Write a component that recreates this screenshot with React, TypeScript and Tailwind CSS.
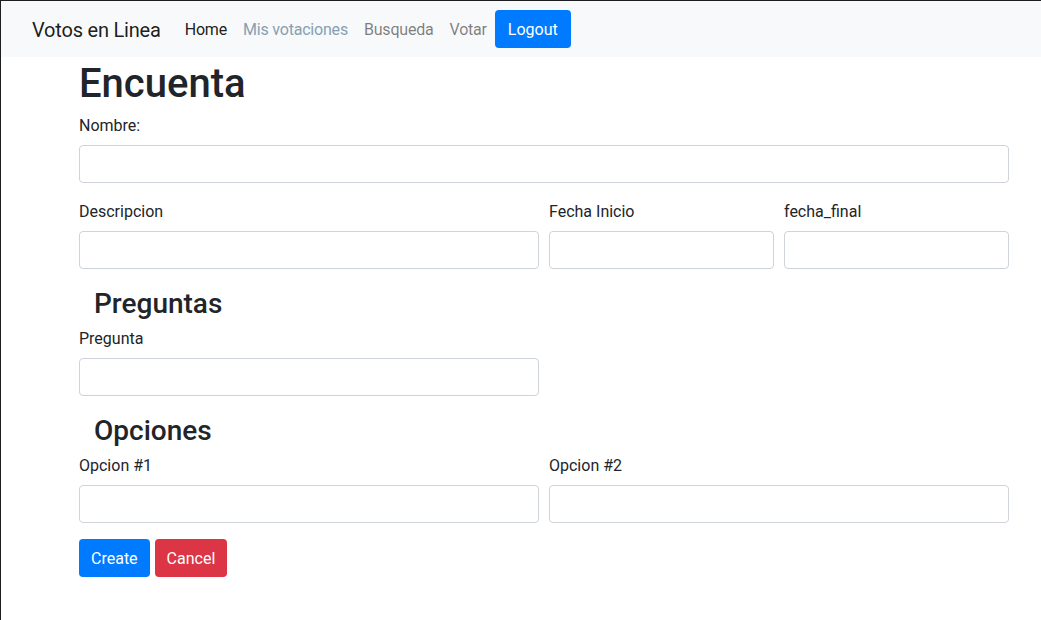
import React from "react";

const font = { fontFamily: "Roboto, 'Noto Sans', sans-serif" };

function Field({ label, className }: { label: string; className?: string }) {
  return (
    <div className={"flex flex-col " + (className ?? "")}>
      <label className="pt-[1px] text-[16px] leading-[24px] text-[#212529] mb-[7px]">{label}</label>
      <input
        type="text"
        className="h-[38px] w-full rounded-[4px] border border-[#ced4da] bg-white px-3 text-[16px] outline-none"
      />
    </div>
  );
}

export default function App() {
  return (
    <div
      className="min-h-[620px] w-full bg-white border-t border-l border-[#1e1e1e] text-[#212529]"
      style={font}
    >
      <nav className="flex h-[56px] items-center bg-[#f8f9fa] pl-[31px]">
        <span className="pt-[1px] text-[20px] leading-[30px] tracking-[-0.2px] text-[rgba(0,0,0,0.9)] mr-[16px]">
          Votos en Linea
        </span>
        <div className="flex items-center">
          <span className="px-[8px] pt-[1px] text-[16px] leading-[24px] tracking-[-0.2px] text-[rgba(0,0,0,0.9)]">Home</span>
          <span className="px-[8px] pt-[1px] text-[16px] leading-[24px] tracking-[-0.2px] text-[#86a0b2]">Mis votaciones</span>
          <span className="px-[8px] pt-[1px] text-[16px] leading-[24px] tracking-[-0.2px] text-[rgba(0,0,0,0.5)]">Busqueda</span>
          <span className="px-[8px] pt-[1px] text-[16px] leading-[24px] tracking-[-0.2px] text-[rgba(0,0,0,0.5)]">Votar</span>
          <button className="h-[38px] rounded-[4px] bg-[#007bff] px-[13px] pt-[1px] text-[16px] leading-[24px] text-white">
            Logout
          </button>
        </div>
      </nav>

      <div className="ml-[78px] w-[930px]">
        <h1 className="pt-[3px] mb-[5px] text-[40px] leading-[48px] font-medium">Encuenta</h1>

        <Field label="Nombre:" className="mb-[16px]" />

        <div className="flex gap-[10px] mb-[16px]">
          <Field label="Descripcion" className="w-[460px]" />
          <Field label="Fecha Inicio" className="w-[225px]" />
          <Field label="fecha_final" className="w-[225px]" />
        </div>

        <h3 className="pl-[15px] pt-[2px] mb-[6px] text-[28px] leading-[33px] font-medium">Preguntas</h3>

        <div className="flex mb-[16px]">
          <Field label="Pregunta" className="w-[460px]" />
        </div>

        <h3 className="pl-[15px] pt-[2px] mb-[6px] text-[28px] leading-[33px] font-medium">Opciones</h3>

        <div className="flex gap-[10px] mb-[16px]">
          <Field label="Opcion #1" className="w-[460px]" />
          <Field label="Opcion #2" className="w-[460px]" />
        </div>

        <div className="flex gap-[5px]">
          <button className="h-[38px] rounded-[4px] bg-[#007bff] px-[12px] pt-[1px] text-[16px] leading-[24px] text-white">
            Create
          </button>
          <button className="h-[38px] rounded-[4px] bg-[#dc3545] px-[12px] pt-[1px] text-[16px] leading-[24px] text-white">
            Cancel
          </button>
        </div>
      </div>
    </div>
  );
}
